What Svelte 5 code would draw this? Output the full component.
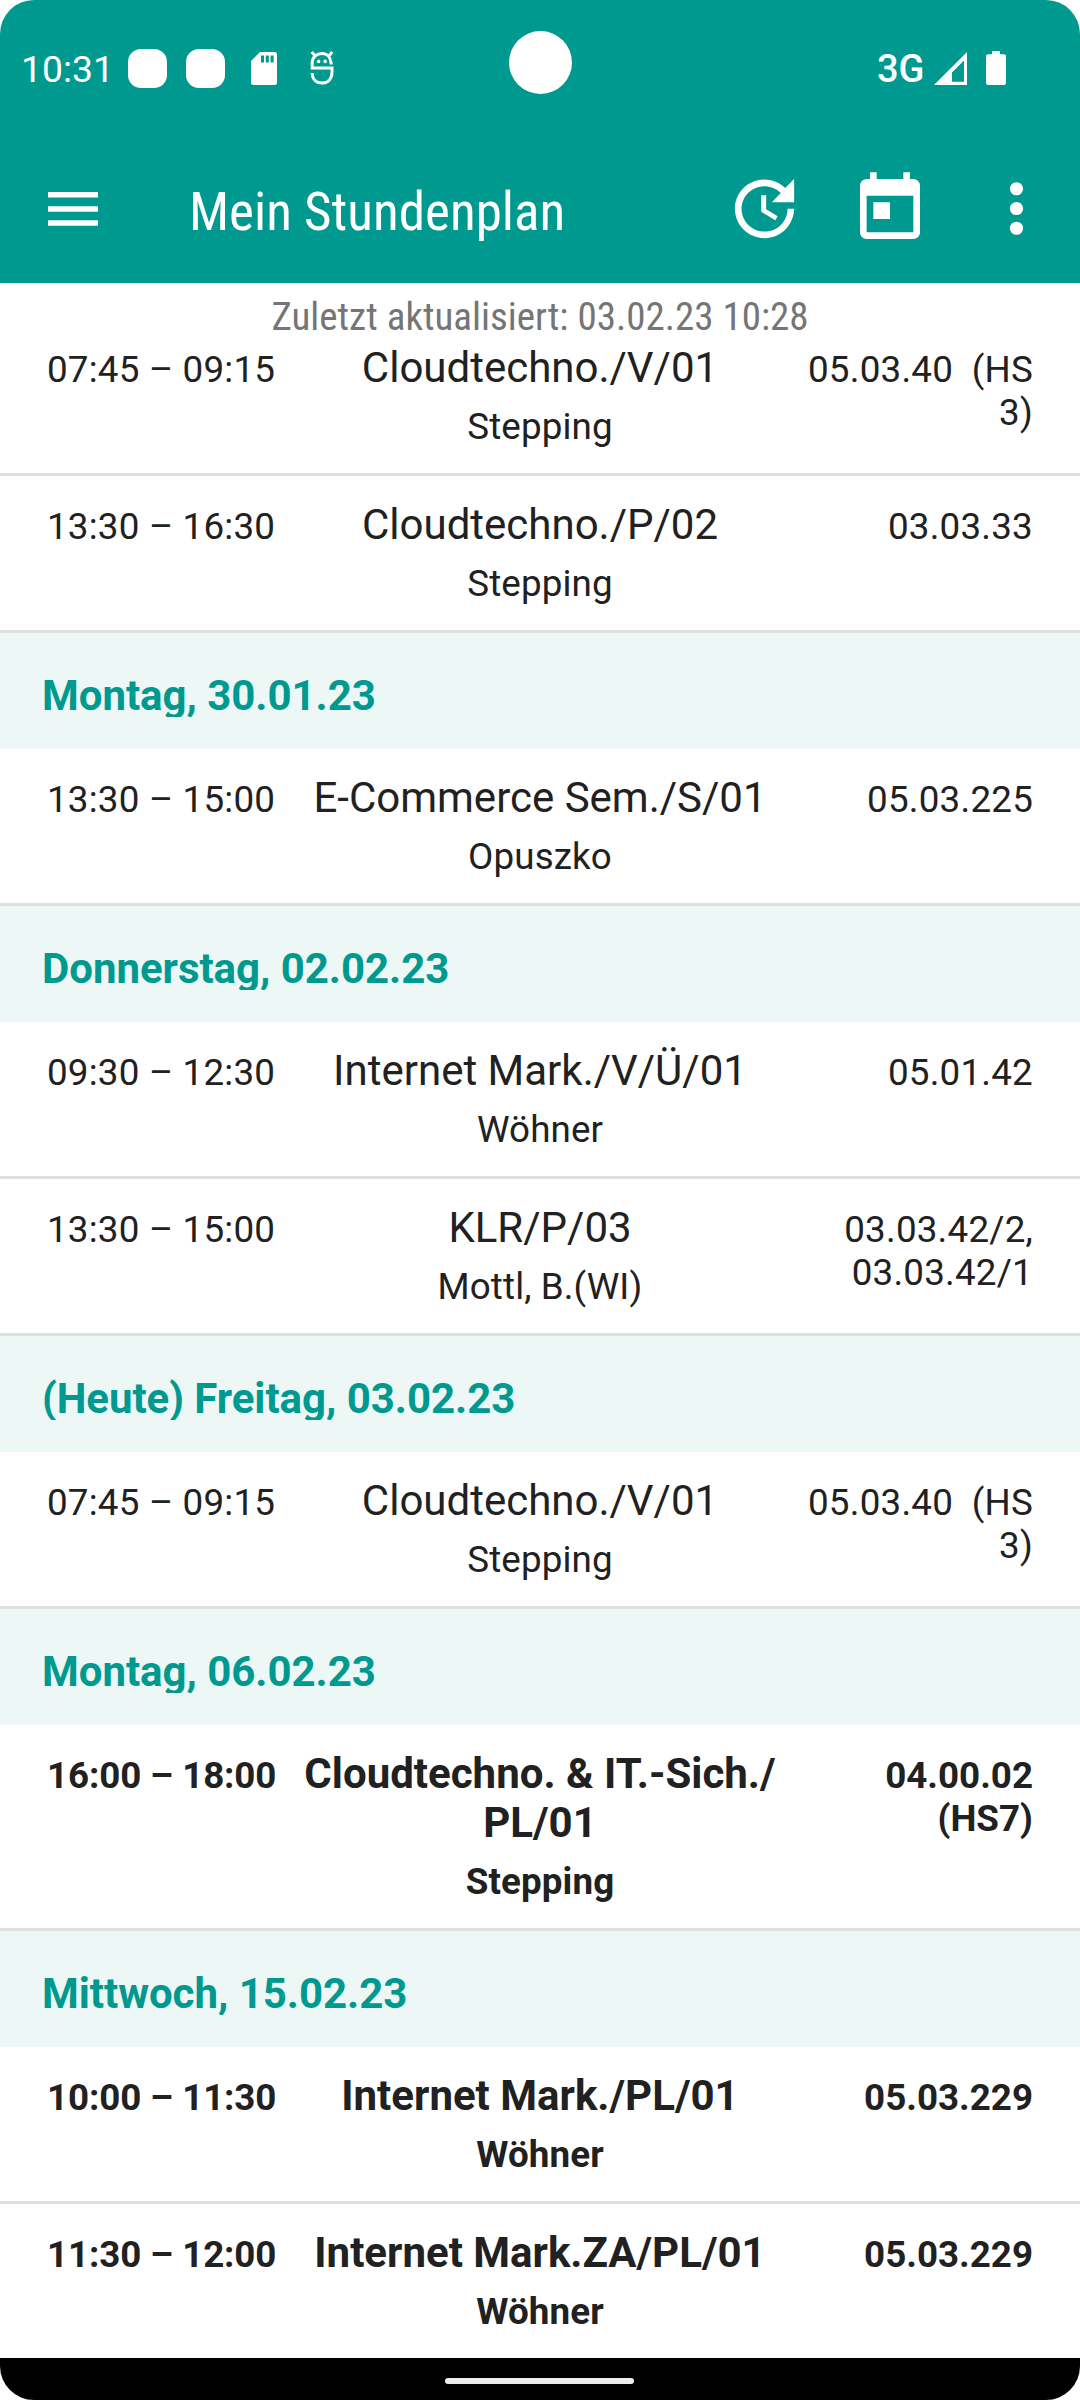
<script>
  const days = [
    {
      label: null,
      lessons: [
        { time: '07:45 – 09:15', title: 'Cloudtechno./V/01', teacher: 'Stepping', room: '05.03.40  (HS\n3)' },
        { time: '13:30 – 16:30', title: 'Cloudtechno./P/02', teacher: 'Stepping', room: '03.03.33' }
      ]
    },
    {
      label: 'Montag, 30.01.23',
      lessons: [{ time: '13:30 – 15:00', title: 'E-Commerce Sem./S/01', teacher: 'Opuszko', room: '05.03.225' }]
    },
    {
      label: 'Donnerstag, 02.02.23',
      lessons: [
        { time: '09:30 – 12:30', title: 'Internet Mark./V/Ü/01', teacher: 'Wöhner', room: '05.01.42' },
        { time: '13:30 – 15:00', title: 'KLR/P/03', teacher: 'Mottl, B.(WI)', room: '03.03.42/2,\n03.03.42/1' }
      ]
    },
    {
      label: '(Heute) Freitag, 03.02.23',
      lessons: [{ time: '07:45 – 09:15', title: 'Cloudtechno./V/01', teacher: 'Stepping', room: '05.03.40  (HS\n3)' }]
    },
    {
      label: 'Montag, 06.02.23',
      lessons: [{ time: '16:00 – 18:00', title: 'Cloudtechno. & IT.-Sich./\nPL/01', teacher: 'Stepping', room: '04.00.02\n(HS7)', exam: true }]
    },
    {
      label: 'Mittwoch, 15.02.23',
      lessons: [
        { time: '10:00 – 11:30', title: 'Internet Mark./PL/01', teacher: 'Wöhner', room: '05.03.229', exam: true },
        { time: '11:30 – 12:00', title: 'Internet Mark.ZA/PL/01', teacher: 'Wöhner', room: '05.03.229', exam: true }
      ]
    }
  ];
</script>

<div class="screen">
  <header>
    <div class="status">
      <span class="clock">10:31</span>
      <span class="blob"></span>
      <span class="blob second"></span>
      <svg class="sd" viewBox="0 0 26 33"><path fill-rule="evenodd" d="M9 0H23.5Q26 0 26 2.5V30.5Q26 33 23.5 33H2.5Q0 33 0 30.5V9ZM10 3.5V10.5H13V3.5ZM14.8 3.5V10.5H17.8V3.5ZM19.6 3.5V10.5H22.6V3.5Z" /></svg>
      <svg class="bug" viewBox="0 0 24 34"><g fill="none" stroke="#fff" stroke-width="3"><path d="M22.6 12H21C20.6 6 17 2.4 12 2.4S2.2 6 2.2 12V17H22V21C22 28 18 32 12 32S2.2 28 2.2 22" /><path d="M1.8 1 4.8 4.4M22.2 1 19.2 4.4" /></g><circle cx="8.6" cy="10.4" r="1.8" /><circle cx="15.2" cy="10.4" r="1.8" /></svg>
      <span class="network">3G</span>
      <svg class="signal" viewBox="0 0 33 33"><path fill-rule="evenodd" d="M33 0V33H0ZM30 8.5 18 20.5V29.7H30Z" /></svg>
      <svg class="battery" viewBox="0 0 20 34"><path d="M6 0H14V3.3H18Q20 3.3 20 5.3V32Q20 34 18 34H2Q0 34 0 32V5.3Q0 3.3 2 3.3H6Z" /></svg>
      <span class="camera"></span>
    </div>
    <div class="appbar">
      <svg class="menu" viewBox="0 0 50 34"><path d="M0 0H50V5.4H0ZM0 14.2H50V19.7H0ZM0 28.3H50V33.8H0Z" /></svg>
      <h1>Mein Stundenplan</h1>
      <svg class="update" viewBox="0 0 24 24"><path d="M21 10.12h-6.78l2.74-2.82c-2.73-2.7-7.15-2.8-9.88-.1-2.73 2.71-2.73 7.08 0 9.79s7.15 2.71 9.88 0C18.32 15.65 19 14.08 19 12.1h2c0 1.98-.88 4.55-2.64 6.29-3.51 3.48-9.21 3.48-12.72 0-3.5-3.47-3.53-9.11-.02-12.58s9.14-3.47 12.65 0L21 3v7.12zM12.5 8v4.25l3.5 2.08-.72 1.21L11 13V8h1.5z" /></svg>
      <svg class="today" viewBox="0 0 24 24"><path d="M19 3h-1V1h-2v2H8V1H6v2H5c-1.11 0-1.99.9-1.99 2L3 19c0 1.1.89 2 2 2h14c1.1 0 2-.9 2-2V5c0-1.1-.9-2-2-2zm0 16H5V8h14v11zM7 10h5v5H7v-5z" /></svg>
      <svg class="more" viewBox="0 0 24 24"><circle cx="12" cy="6" r="2" /><circle cx="12" cy="12" r="2" /><circle cx="12" cy="18" r="2" /></svg>
    </div>
  </header>

  <main>
    <p class="updated">Zuletzt aktualisiert: 03.02.23 10:28</p>
    {#each days as day}
      <section>
        {#if day.label}
          <h2><span>{day.label}</span></h2>
        {/if}
        {#each day.lessons as lesson}
          <article class:exam={lesson.exam}>
            <div class="time">{lesson.time}</div>
            <div class="subject">
              <div class="title">{lesson.title}</div>
              <div class="teacher">{lesson.teacher}</div>
            </div>
            <div class="room">{lesson.room}</div>
          </article>
        {/each}
      </section>
    {/each}
  </main>

  <footer><span class="pill"></span></footer>
</div>

<style>
  :global(body) {
    margin: 0;
    background: #fff;
  }
  .screen {
    width: 1080px;
    height: 2400px;
    display: flex;
    flex-direction: column;
    overflow: hidden;
    border-radius: 34px;
    background: #fff;
    color: #212121;
    font-family: Roboto, 'Liberation Sans', sans-serif;
  }
  header {
    height: 283px;
    flex: none;
    background: #009990;
    color: #fff;
  }
  svg {
    display: block;
    flex: none;
    fill: #fff;
  }
  .status {
    position: relative;
    height: 136px;
    display: flex;
    align-items: center;
    padding-left: 21px;
  }
  .clock {
    width: 107px;
    font-size: 37.3px;
    line-height: 44px;
    padding-top: 2px;
    box-sizing: border-box;
  }
  .blob {
    width: 39px;
    height: 39px;
    border-radius: 13px;
    background: #fff;
  }
  .second {
    margin-left: 19px;
  }
  .sd {
    width: 26px;
    height: 33px;
    margin-left: 26px;
  }
  .bug {
    width: 24px;
    height: 34px;
    margin-left: 33px;
  }
  .network {
    width: 57px;
    margin: 1px 0 0 543px;
    font-size: 38px;
    font-weight: 480;
    line-height: 44px;
  }
  .signal {
    width: 33px;
    height: 33px;
  }
  .battery {
    width: 20px;
    height: 34px;
    margin-left: 19px;
  }
  .camera {
    position: absolute;
    left: 509px;
    top: 31px;
    width: 63px;
    height: 63px;
    border-radius: 50%;
    background: #fff;
  }
  .appbar {
    height: 147px;
    display: flex;
    align-items: center;
    padding-left: 48px;
  }
  .menu {
    width: 50px;
    height: 34px;
    margin-top: -2px;
  }
  h1 {
    width: 536px;
    margin: 4px 0 0 91px;
    font-size: 53.1px;
    line-height: 62px;
    font-weight: 400;
    white-space: nowrap;
    font-stretch: condensed;
    font-family: 'Roboto Condensed', Roboto, sans-serif;
  }
  .update {
    width: 79px;
    height: 79px;
    margin-top: -2px;
  }
  .today {
    width: 80px;
    height: 80px;
    margin: -2px 0 0 46px;
  }
  .more {
    width: 79px;
    height: 79px;
    margin: -2px 0 0 47px;
  }
  main {
    height: 2075px;
    overflow: hidden;
  }
  .updated {
    height: 36px;
    margin: 0;
    color: #757575;
    text-align: center;
    font-size: 39px;
    line-height: 69px;
    white-space: nowrap;
    font-stretch: condensed;
    font-family: 'Roboto Condensed', Roboto, sans-serif;
  }
  h2 {
    height: 116px;
    box-sizing: border-box;
    margin: 0;
    padding: 38px 42px 0;
    background: #edf7f6;
    color: #009990;
    font-size: 42px;
    line-height: 49px;
    font-weight: 700;
    letter-spacing: -0.04px;
  }
  h2 span {
    display: block;
    height: 46px;
    overflow: hidden;
  }
  article {
    display: grid;
    grid-template-columns: 245px 1fr 245px;
    padding: 24px 47px 25px;
    border-bottom: 3px solid #e0e0e0;
    font-size: 36.75px;
    line-height: 43px;
  }
  .time,
  .room {
    padding-top: 5px;
    white-space: pre;
    letter-spacing: 0.22px;
  }
  .subject {
    text-align: center;
  }
  .title {
    margin-bottom: 13px;
    font-size: 42px;
    line-height: 49px;
    white-space: pre;
  }
  .teacher {
    letter-spacing: 0.12px;
  }
  .room {
    text-align: right;
  }
  .exam {
    font-weight: 700;
  }
  .exam .time {
    letter-spacing: -0.12px;
  }
  .exam .room {
    letter-spacing: 0;
  }
  footer {
    height: 42px;
    flex: none;
    display: flex;
    justify-content: center;
    align-items: center;
    background: #000;
  }
  .pill {
    width: 189px;
    height: 6px;
    margin: 4px 1px 0 0;
    border-radius: 3px;
    background: #ededed;
  }
</style>
